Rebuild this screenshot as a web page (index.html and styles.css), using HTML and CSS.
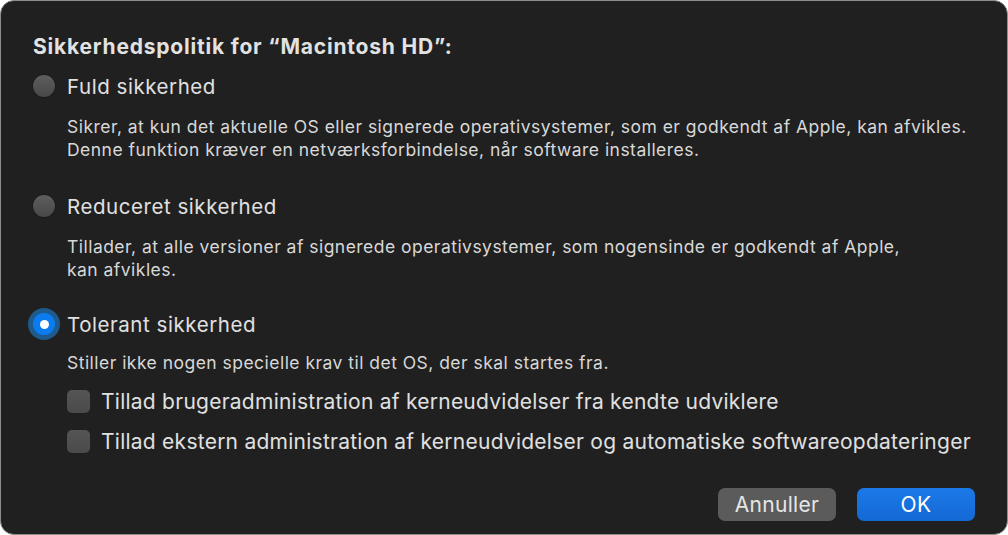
FILE: index.html
```html
<!DOCTYPE html>
<html lang="da">
<head>
<meta charset="utf-8">
<link rel="stylesheet" href="styles.css">
</head>
<body>
<div class="window">
  <h1 class="title">Sikkerhedspolitik for “Macintosh HD”:</h1>

  <div class="option">
    <span class="radio"></span>
    <span class="label">Fuld sikkerhed</span>
  </div>
  <p class="desc desc-first">Sikrer, at kun det aktuelle OS eller signerede operativsystemer, som er godkendt af Apple, kan afvikles.<br>Denne funktion kræver en netværksforbindelse, når software installeres.</p>

  <div class="option option-2">
    <span class="radio"></span>
    <span class="label">Reduceret sikkerhed</span>
  </div>
  <p class="desc">Tillader, at alle versioner af signerede operativsystemer, som nogensinde er godkendt af Apple,<br>kan afvikles.</p>

  <div class="option option-3">
    <span class="radio radio-on"><span class="dot"></span></span>
    <span class="label">Tolerant sikkerhed</span>
  </div>
  <p class="desc desc-short">Stiller ikke nogen specielle krav til det OS, der skal startes fra.</p>

  <div class="check">
    <span class="box"></span>
    <span class="check-label">Tillad brugeradministration af kerneudvidelser fra kendte udviklere</span>
  </div>
  <div class="check">
    <span class="box"></span>
    <span class="check-label">Tillad ekstern administration af kerneudvidelser og automatiske softwareopdateringer</span>
  </div>

  <div class="buttons">
    <button class="btn btn-cancel">Annuller</button>
    <button class="btn btn-ok">OK</button>
  </div>
</div>
</body>
</html>
```

FILE: styles.css
```css
* { box-sizing: border-box; }
html, body {
  margin: 0;
  padding: 0;
  background: #ffffff;
}
body {
  font-family: Inter, "Noto Sans", "Liberation Sans", sans-serif;
  color: #dedede;
}
.window {
  width: 1008px;
  height: 535px;
  background: #202020;
  border: 1px solid #8e8e8e;
  border-radius: 14px;
  padding: 34px 32px 0 32px;
  display: flex;
  flex-direction: column;
  overflow: hidden;
}
.title {
  margin: 0;
  font-size: 21px;
  font-weight: 700;
  line-height: 24px;
  color: #e2e2e2;
  letter-spacing: 0.8px;
  white-space: nowrap;
}
.option {
  display: flex;
  align-items: center;
  height: 28px;
  margin-top: 13px;
  gap: 12px;
}
.option-2 { margin-top: 31px; }
.option-3 { margin-top: 29px; }
.radio {
  width: 22px;
  height: 22px;
  border-radius: 50%;
  background: linear-gradient(#5e5e5e, #484848);
  box-shadow: 0 0 0 0.5px rgba(0,0,0,0.4);
  flex: none;
  display: flex;
  align-items: center;
  justify-content: center;
}
.radio-on {
  background: #0b7cf0;
  box-shadow: 0 0 0 5px #1e5b8c;
}
.dot {
  width: 9px;
  height: 9px;
  border-radius: 50%;
  background: #ffffff;
}
.label {
  font-size: 20.5px;
  color: #e0e0e0;
  letter-spacing: 0.55px;
  white-space: nowrap;
}
.desc {
  margin: 0;
  margin-top: 15px;
  padding-left: 34px;
  font-size: 17.5px;
  line-height: 23px;
  color: #d8d8d8;
  letter-spacing: 0.47px;
  white-space: nowrap;
}
.desc-short { margin-top: 13px; }
.check {
  display: flex;
  align-items: center;
  height: 28px;
  margin-top: 13px;
  padding-left: 34px;
  gap: 11px;
}
.check + .check { margin-top: 12px; }
.box {
  width: 23px;
  height: 23px;
  border-radius: 5px;
  background: linear-gradient(#555555, #4a4a4a);
  flex: none;
}
.check-label {
  font-size: 21px;
  color: #e0e0e0;
  letter-spacing: 0.25px;
  white-space: nowrap;
}
.buttons {
  display: flex;
  justify-content: flex-end;
  gap: 21px;
  margin-top: auto;
  margin-bottom: 13px;
}
.btn {
  width: 118px;
  height: 33px;
  border: none;
  border-radius: 7px;
  font-family: inherit;
  font-size: 21px;
  letter-spacing: 0.3px;
  padding: 0;
}
.btn-cancel {
  background: #5b5b5b;
  color: #e6e6e6;
}
.btn-ok {
  background: linear-gradient(#1b7ae8, #1468d4);
  color: #ffffff;
}
```
